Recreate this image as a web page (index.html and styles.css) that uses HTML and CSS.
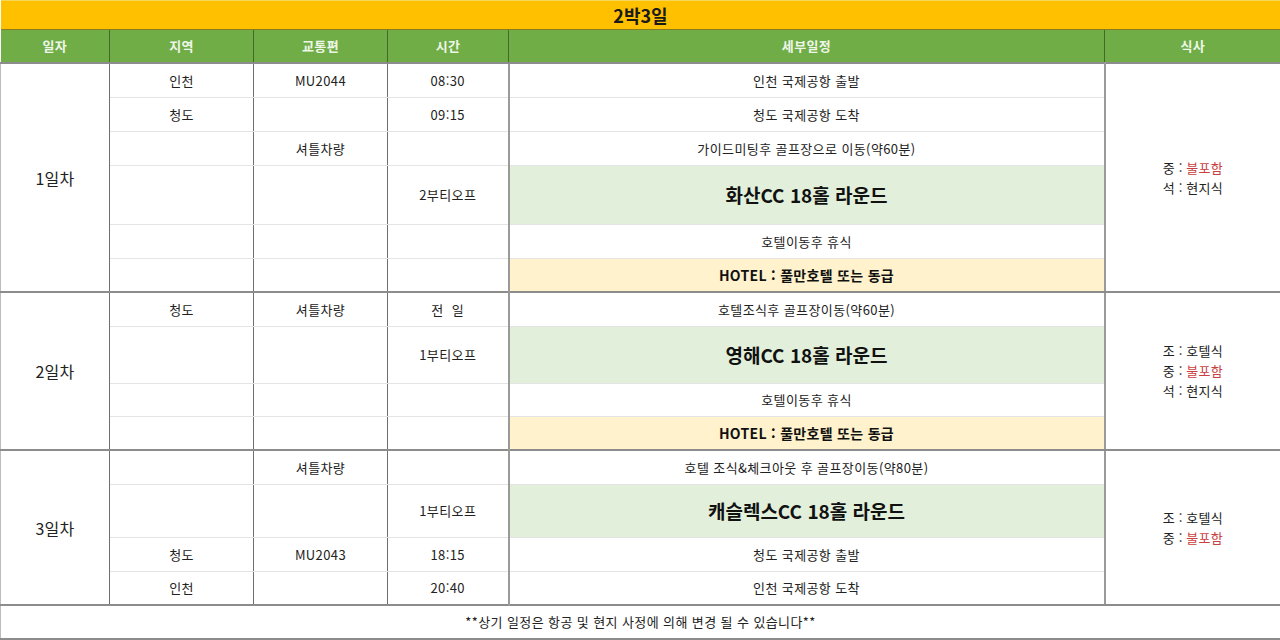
FILE: index.html
```html
<!DOCTYPE html>
<html lang="ko">
<head>
<meta charset="utf-8">
<link rel="stylesheet" href="styles.css">
</head>
<body>
<table class="sched">
  <colgroup>
    <col class="c1"><col class="c2"><col class="c3"><col class="c4"><col class="c5"><col class="c6">
  </colgroup>
  <tr class="title"><td colspan="6">2박3일</td></tr>
  <tr class="head"><th>일자</th><th>지역</th><th>교통편</th><th>시간</th><th>세부일정</th><th>식사</th></tr>

  <tr class="r34 dstart"><td class="day" rowspan="6">1일차</td><td>인천</td><td>MU2044</td><td>08:30</td><td class="det">인천 국제공항 출발</td><td class="meal" rowspan="6">중 : <span class="red">불포함</span><br>석 : 현지식</td></tr>
  <tr class="r34"><td>청도</td><td></td><td>09:15</td><td class="det">청도 국제공항 도착</td></tr>
  <tr class="r34"><td></td><td>셔틀차량</td><td></td><td class="det">가이드미팅후 골프장으로 이동(약60분)</td></tr>
  <tr class="r60"><td></td><td></td><td>2부티오프</td><td class="det golf">화산CC 18홀 라운드</td></tr>
  <tr class="r34"><td></td><td></td><td></td><td class="det">호텔이동후 휴식</td></tr>
  <tr class="r33"><td></td><td></td><td></td><td class="det hotel">HOTEL : 풀만호텔 또는 동급</td></tr>

  <tr class="r34 dstart"><td class="day" rowspan="4">2일차</td><td>청도</td><td>셔틀차량</td><td>전 &nbsp;일</td><td class="det">호텔조식후 골프장이동(약60분)</td><td class="meal" rowspan="4">조 : 호텔식<br>중 : <span class="red">불포함</span><br>석 : 현지식</td></tr>
  <tr class="r58"><td></td><td></td><td>1부티오프</td><td class="det golf">영해CC 18홀 라운드</td></tr>
  <tr class="r33"><td></td><td></td><td></td><td class="det">호텔이동후 휴식</td></tr>
  <tr class="r33"><td></td><td></td><td></td><td class="det hotel">HOTEL : 풀만호텔 또는 동급</td></tr>

  <tr class="r34 dstart"><td class="day" rowspan="4">3일차</td><td></td><td>셔틀차량</td><td></td><td class="det">호텔 조식&amp;체크아웃 후 골프장이동(약80분)</td><td class="meal" rowspan="4">조 : 호텔식<br>중 : <span class="red">불포함</span></td></tr>
  <tr class="r54"><td></td><td></td><td>1부티오프</td><td class="det golf">캐슬렉스CC 18홀 라운드</td></tr>
  <tr class="r34"><td>청도</td><td>MU2043</td><td>18:15</td><td class="det">청도 국제공항 출발</td></tr>
  <tr class="r33"><td>인천</td><td></td><td>20:40</td><td class="det">인천 국제공항 도착</td></tr>

  <tr class="foot dstart"><td colspan="6">**상기 일정은 항공 및 현지 사정에 의해 변경 될 수 있습니다**</td></tr>
</table>
</body>
</html>
```
FILE: styles.css
```css
html, body {
  margin: 0;
  padding: 0;
  background: #ffffff;
}
body {
  font-family: "Noto Sans CJK KR", "Noto Sans", sans-serif;
  color: #222222;
}
.sched {
  width: 1280px;
  table-layout: fixed;
  border-collapse: collapse;
}
.c1 { width: 109px; }
.c2 { width: 144px; }
.c3 { width: 134px; }
.c4 { width: 121px; }
.c5 { width: 596px; }
.c6 { width: 176px; }

.sched td, .sched th {
  padding: 0;
  text-align: center;
  vertical-align: middle;
  font-size: 13px;
  letter-spacing: 0.4px;
  line-height: 18px;
  border-left: 1px solid #6f6f6f;
  border-right: 1px solid #6f6f6f;
  border-top: 1px solid #e4e4e4;
  border-bottom: 1px solid #e4e4e4;
}
.sched td.det {
  border-left: 2px solid #9a9a9a;
  border-right: 2px solid #9a9a9a;
}
.sched td:first-child { border-left: 1px solid #bdbdbd; }
.sched td.meal { border-right: 1px solid #8a8a8a; }

.sched .title td {
  height: 28px;
  background: #ffc000;
  border: none;
  border-top: 1px solid #f5d65a;
  border-bottom: 1px solid #8a7a20;
  font-weight: bold;
  font-size: 18px;
  letter-spacing: 0;
  color: #1a1a1a;
}
.sched .head th {
  height: 32px;
  background: #70ad47;
  color: #eef6e8;
  font-weight: bold;
  font-size: 13px;
  border-top: none;
  border-bottom: 1px solid #3c5a28;
  border-left: 1px solid #3f6a28;
  border-right: 1px solid #3f6a28;
}
.sched .head th:first-child { border-left: none; }
.sched .head th:last-child { border-right: none; }

.r34 td { height: 33px; }
.r33 td { height: 32px; }
.r60 td { height: 58px; }
.r58 td { height: 56px; }
.r54 td { height: 52px; }

.dstart td { border-top: 2px solid #8c8c8c; }
.sched td.day, .sched td.meal { border-bottom: 2px solid #8c8c8c; }

.sched td.day {
  font-size: 16px;
  letter-spacing: 0.3px;
  color: #222222;
}
.sched td.meal {
  line-height: 20px;
  font-size: 13px;
  letter-spacing: 0.2px;
}
.red { color: #c9403f; }

.sched td.golf {
  background: #e2efda;
  font-size: 19px;
  letter-spacing: 0;
  font-weight: bold;
  color: #111111;
}
.sched td.hotel {
  background: #fff2cc;
  font-weight: bold;
  font-size: 14px;
  letter-spacing: 0.3px;
  color: #111111;
}
.sched .foot td {
  height: 32px;
  border-left: 1px solid #bdbdbd;
  border-right: 1px solid #8a8a8a;
  border-bottom: 2px solid #8c8c8c;
}
```
